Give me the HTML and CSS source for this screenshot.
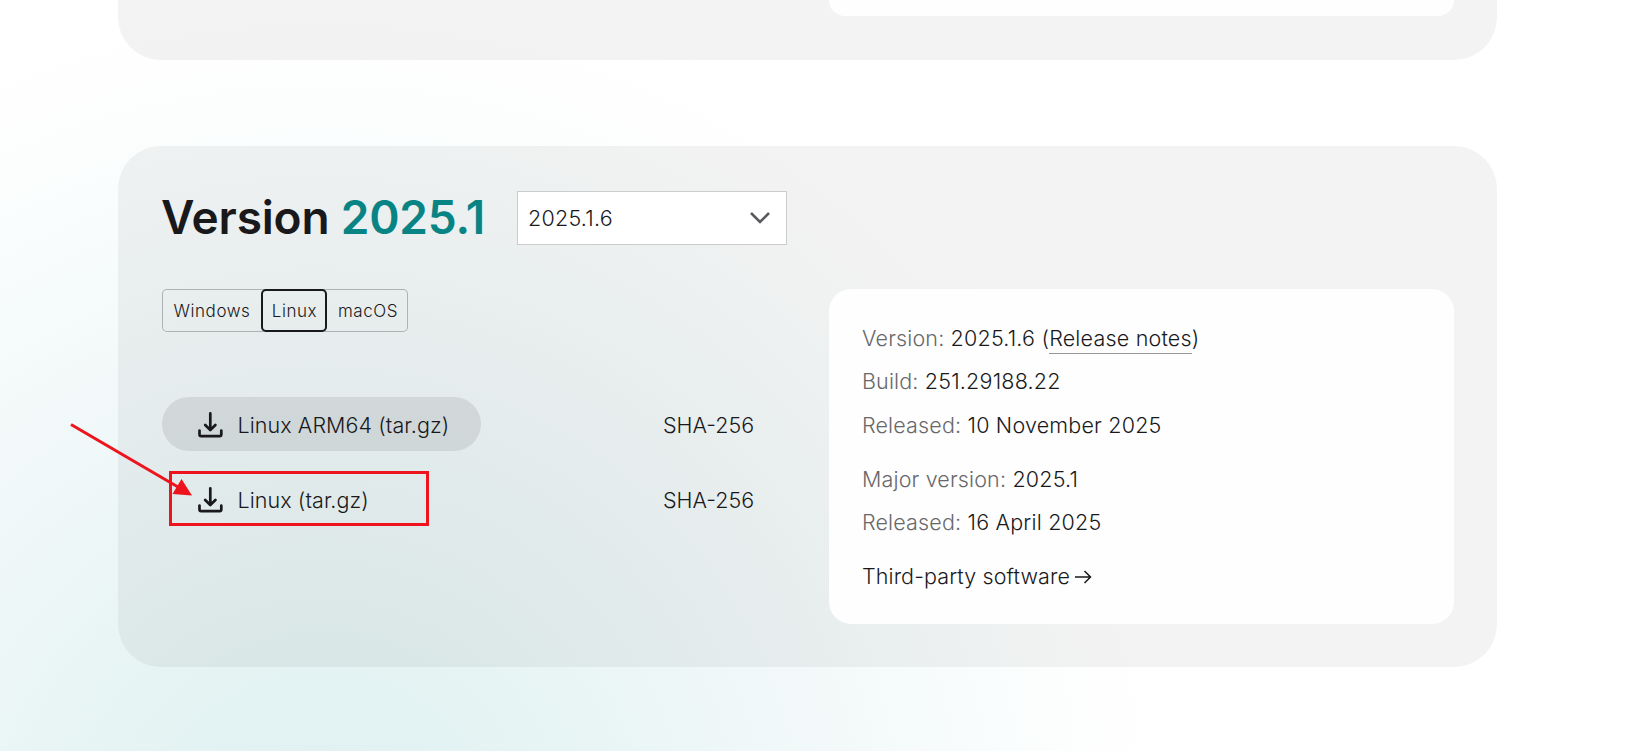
FILE: index.html
```
<!DOCTYPE html>
<html lang="en">
<head>
<meta charset="UTF-8">
<meta name="viewport" content="width=device-width, initial-scale=1.0">
<title>Other Versions</title>
<link rel="stylesheet" href="styles.css">
</head>
<body>

<div class="page">
    <section class="version version-previous">
        <div class="info info-previous"></div>
    </section>

    <section class="version">
        <div class="version-header">
            <h2>Version <span class="number">2025.1</span></h2>
            <div class="select">
                <span>2025.1.6</span>
                <svg width="20" height="13" viewBox="0 0 20 13" fill="none" stroke="#5a5b5e" stroke-width="2.6"><path d="M1 1l9 9 9-9"/></svg>
            </div>
        </div>

        <div class="version-body">
            <div class="downloads">
                <div class="tabs">
                    <button type="button" class="tab tab-windows">Windows</button>
                    <button type="button" class="tab tab-linux active">Linux</button>
                    <button type="button" class="tab tab-macos">macOS</button>
                </div>

                <div class="download-row">
                    <a class="download hovered">
                        <svg class="icon" width="26" height="26" viewBox="0 0 26 26" fill="none" stroke="#19191c" stroke-width="2.7" stroke-linecap="round" stroke-linejoin="round"><path d="M12.300 1.400v16.400M7.200 13l5.100 5 5.100-5M1.500 18.600v4q0 1.600 1.600 1.600h18.600q1.600 0 1.600-1.600v-4"/></svg>
                        Linux ARM64 (tar.gz)
                    </a>
                    <a class="checksum">SHA-256</a>
                </div>
                <div class="download-row">
                    <a class="download">
                        <svg class="icon" width="26" height="26" viewBox="0 0 26 26" fill="none" stroke="#19191c" stroke-width="2.7" stroke-linecap="round" stroke-linejoin="round"><path d="M12.300 1.400v16.400M7.200 13l5.100 5 5.100-5M1.500 18.600v4q0 1.600 1.600 1.600h18.600q1.600 0 1.600-1.600v-4"/></svg>
                        Linux (tar.gz)
                    </a>
                    <a class="checksum">SHA-256</a>
                </div>
            </div>

            <div class="info">
                <p><span class="label">Version:</span> 2025.1.6 (<a class="link">Release notes</a>)</p>
                <p><span class="label">Build:</span> 251.29188.22</p>
                <p><span class="label">Released:</span> 10 November 2025</p>
                <p class="group"><span class="label">Major version:</span> 2025.1</p>
                <p><span class="label">Released:</span> 16 April 2025</p>
                <p class="group"><a class="third-party">Third-party software</a><svg class="arrow" width="17" height="14" viewBox="0 0 17 14" fill="none" stroke="#19191c" stroke-width="1.5"><path d="M0 7h15.500M9.500 1l6 6-6 6"/></svg></p>
            </div>
        </div>
    </section>
</div>

<!-- marker around the Linux download -->
<svg class="marker" width="380" height="120" viewBox="0 0 380 120" fill="none" stroke="#ed141d">
    <rect x="110.500" y="52.500" width="257" height="52" stroke-width="3"/>
    <path d="M11 4.500L118 67" stroke-width="3"/>
    <path d="M132 75.500L112.500 74L121.500 59z" fill="#ed141d" stroke="none"/>
</svg>

</body>
</html>
```
FILE: styles.css
```
* {
  box-sizing: border-box;
}

body {
  margin: 0;
  height: 751px;
  overflow: hidden;
  position: relative;
  font-family: Inter, "Liberation Sans", sans-serif;
  font-size: 21.5px;
  font-weight: 300;
  color: #19191c;
  background: radial-gradient(circle at 320px 850px, #e0f0f0 0, #e3f2f2 150px, #e9f5f5 300px, #eff7f8 430px, #f5fafa 580px, #fafdfd 700px, #fefefe 800px, #fff 880px);
}

.page {
  width: 1379px;
  margin-left: 118px;
}

.version {
  height: 521px;
  padding: 45px 43px 43px 44px;
  border-radius: 43px;
  background: rgba(25, 25, 28, 0.05);
}

.version-previous {
  height: 60px;
  margin-bottom: 86px;
  padding: 0 43px;
  border-radius: 0 0 43px 43px;
}

.version-header {
  display: flex;
  height: 54px;
}

h2 {
  width: 355px;
  margin: 0;
  font-size: 46px;
  font-weight: 580;
  line-height: 53px;
  letter-spacing: -0.2px;
  text-indent: -1px;
  white-space: nowrap;
}

.number {
  color: #088484;
}

.select {
  display: flex;
  align-items: center;
  justify-content: space-between;
  width: 270px;
  padding: 0 16px 0 10px;
  border: 1px solid #ccc;
  background: #fff;
  letter-spacing: 0.25px;
}

.version-body {
  display: flex;
  justify-content: space-between;
  margin-top: 44px;
}

.downloads {
  width: 600px;
}

.tabs {
  display: flex;
  width: 246px;
  height: 43px;
  margin-bottom: 65px;
  border-radius: 5px;
  box-shadow: inset 0 0 0 1px #aeb2b2;
}

.tab {
  padding: 0 0 0 1px;
  border: 0;
  background: none;
  color: inherit;
  font: inherit;
  font-size: 17px;
  letter-spacing: 0.55px;
}

.tab-windows {
  width: 99px;
}

.tab-linux {
  width: 66px;
}

.tab-macos {
  width: 81px;
}

.tab.active {
  border: 2px solid #19191c;
  border-radius: 5px;
}

.download-row {
  display: flex;
  align-items: center;
  height: 54px;
  margin-bottom: 21px;
}

.download {
  display: flex;
  align-items: center;
  width: 319px;
  height: 54px;
  padding-left: 36px;
  padding-top: 1px;
  border-radius: 27px;
  letter-spacing: 0.07px;
  white-space: nowrap;
}

.download.hovered {
  background: rgba(25, 25, 28, 0.09);
}

.icon {
  margin-right: 13.5px;
}

.checksum {
  margin-left: 182px;
  padding-top: 1px;
}

.info {
  width: 625px;
  height: 335px;
  padding: 28px 33px;
  border-radius: 22px;
  background: rgba(255, 255, 255, 0.92);
  letter-spacing: 0.2px;
}

.info-previous {
  height: 16px;
  margin-left: auto;
  padding: 0;
  border-radius: 0 0 22px 22px;
}

.info p {
  margin: 0;
  line-height: 43.3px;
}

.info .group {
  margin-top: 11px;
}

.label {
  color: #68686b;
  letter-spacing: 0.15px;
}

.link {
  padding-bottom: 2px;
  border-bottom: 1px solid #97979a;
}

.third-party {
  letter-spacing: 0.1px;
}

.arrow {
  margin-left: 5px;
}

.marker {
  position: absolute;
  left: 60px;
  top: 420px;
}
```
